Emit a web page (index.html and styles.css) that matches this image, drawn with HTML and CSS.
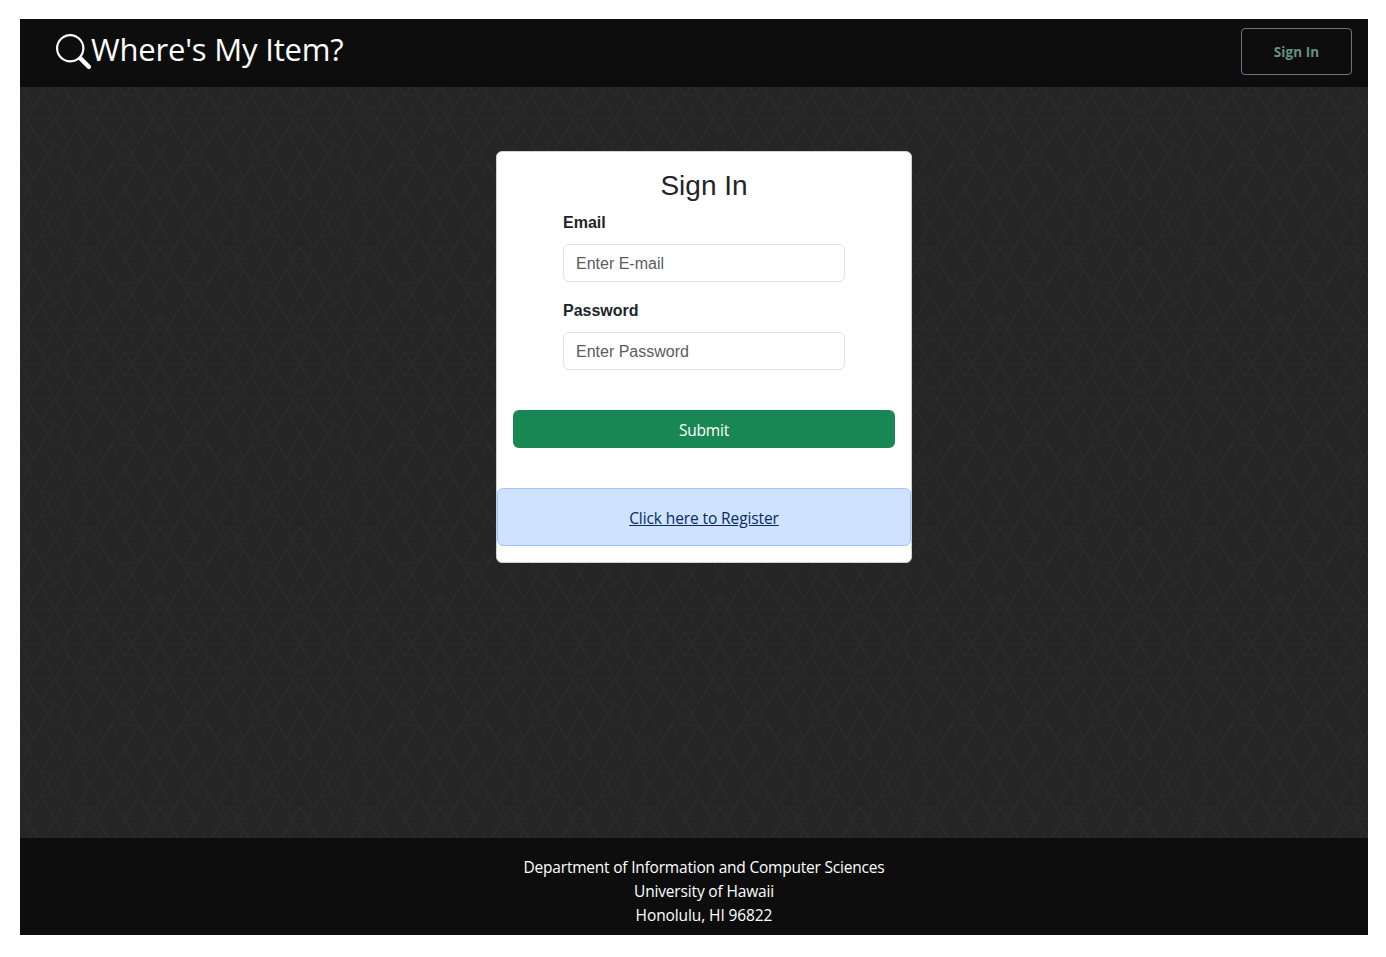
FILE: index.html
```
<!DOCTYPE html>
<html lang="en">
<head>
<meta charset="utf-8">
<title>Where's My Item?</title>
<link rel="stylesheet" href="styles.css">
</head>
<body>
<div class="page">
  <header class="navbar">
    <a class="brand">
      <svg class="brand-icon" viewBox="0 0 16 16" fill="currentColor"><path d="M11.742 10.344a6.5 6.5 0 1 0-1.397 1.398h-.001c.03.04.062.078.098.115l3.85 3.85a1 1 0 0 0 1.415-1.414l-3.85-3.85a1.007 1.007 0 0 0-.115-.1zM12 6.5a5.5 5.5 0 1 1-11 0 5.5 5.5 0 0 1 11 0z"/></svg>
      <span class="brand-name">Where's My Item?</span>
    </a>
    <a class="login"><span class="login-text">Sign In</span></a>
  </header>
  <main class="content">
    <form class="card">
      <h2 class="title">Sign In</h2>
      <div class="fields">
        <label class="label" for="email">Email</label>
        <input class="input" id="email" type="email" placeholder="Enter E-mail">
        <label class="label" for="password">Password</label>
        <input class="input" id="password" type="password" placeholder="Enter Password">
      </div>
      <button class="submit" type="button"><span class="submit-text">Submit</span></button>
      <div class="alert"><a class="register">Click here to Register</a></div>
    </form>
  </main>
  <footer class="footer">
    <div><span class="department">Department of Information and Computer Sciences</span></div>
    <div><span class="university">University of Hawaii</span></div>
    <div><span class="city">Honolulu, HI 96822</span></div>
  </footer>
</div>
</body>
</html>
```
FILE: styles.css
```
* { box-sizing: border-box; }
body {
  margin: 0;
  background: #fff;
  font: 15.5px/24px "Open Sans", "Noto Sans", sans-serif;
}
.page {
  display: flex;
  flex-direction: column;
  width: 1348px;
  height: 916px;
  margin: 19px 0 0 20px;
}
.navbar {
  display: flex;
  justify-content: space-between;
  align-items: flex-start;
  height: 68px;
  padding: 9px 16px 0 36px;
  background: #0d0d0d;
  color: #fff;
}
.brand { display: flex; padding-top: 6px; }
.brand-icon { width: 35px; height: 35px; }
.brand-name {
  font-size: 31px;
  line-height: 30px;
  letter-spacing: -0.18px;
  white-space: nowrap;
}
.login {
  display: flex;
  align-items: center;
  justify-content: center;
  width: 111px;
  height: 47px;
  border: 1px solid #6c757d;
  border-radius: 4px;
  color: #65917f;
  font-size: 13.5px;
  font-weight: 700;
  letter-spacing: 0.1px;
}
.content {
  flex: 1;
  display: flex;
  justify-content: center;
  align-items: flex-start;
  padding: 64px 0 0 20px;
  background-color: #252525;
  background-image: url("data:image/svg+xml,%3Csvg xmlns='http://www.w3.org/2000/svg' width='70' height='70' viewBox='0 0 70 70'%3E%3Cdefs%3E%3Cg id='h' fill='none'%3E%3Cpath stroke='%23292929' d='M-13.5-23.5H13.5M-13.5 23.5H13.5M-35 0H35'/%3E%3Cpath stroke='%232b2b2b' stroke-width='1.2' d='M13.5-23.5 28 0 13.5 23.5M-13.5-23.5-28 0-13.5 23.5M-13.5-23.5 13.5 23.5M13.5-23.5-13.5 23.5M0 23.5 7.5 35 0 46.5-7.5 35Z'/%3E%3C/g%3E%3C/defs%3E%3Cuse href='%23h' x='35' y='35'/%3E%3Cuse href='%23h' x='35' y='-35'/%3E%3Cuse href='%23h'/%3E%3Cuse href='%23h' x='70'/%3E%3Cuse href='%23h' y='70'/%3E%3Cuse href='%23h' x='70' y='70'/%3E%3C/svg%3E");
  background-position: 0 -3px;
}
.card {
  width: 416px;
  height: 412px;
  padding-top: 17px;
  background: #fff;
  border: 1px solid #d0d0d0;
  border-radius: 6px;
  color: #212529;
}
.title {
  margin: 0 0 8px;
  font: 400 28px/34px "Liberation Sans", Arial, sans-serif;
  text-align: center;
}
.fields { padding: 0 66px; font: 16px/24px "Liberation Sans", Arial, sans-serif; }
.label { display: block; margin-bottom: 9px; font-weight: 700; }
.input + .label { padding-top: 1px; }
.input {
  display: block;
  width: 100%;
  height: 38px;
  margin-bottom: 16px;
  padding: 8px 12px 6px;
  border: 1px solid #dee2e6;
  border-radius: 6px;
  background: #fff;
  font: inherit;
}
.input::placeholder { color: #595c5f; opacity: 1; }
.submit {
  display: block;
  width: 382px;
  height: 38px;
  margin: 40px 16px;
  padding: 2px 0 0;
  border: 0;
  border-radius: 6px;
  background: #198754;
  color: #fff;
  font: inherit;
  letter-spacing: -0.2px;
}
.alert {
  height: 58px;
  padding: 17px 16px;
  border: 1px solid #9ec5fe;
  border-radius: 6px;
  background: #cfe2ff;
  text-align: center;
}
.register { color: #052c65; letter-spacing: -0.1px; text-decoration: underline; }
.footer {
  height: 97px;
  padding: 17px 0 0 20px;
  background: #0d0d0d;
  color: #fff;
  text-align: center;
}
.department { letter-spacing: -0.21px; }
.university { letter-spacing: -0.16px; }
.city { letter-spacing: -0.1px; }
```
